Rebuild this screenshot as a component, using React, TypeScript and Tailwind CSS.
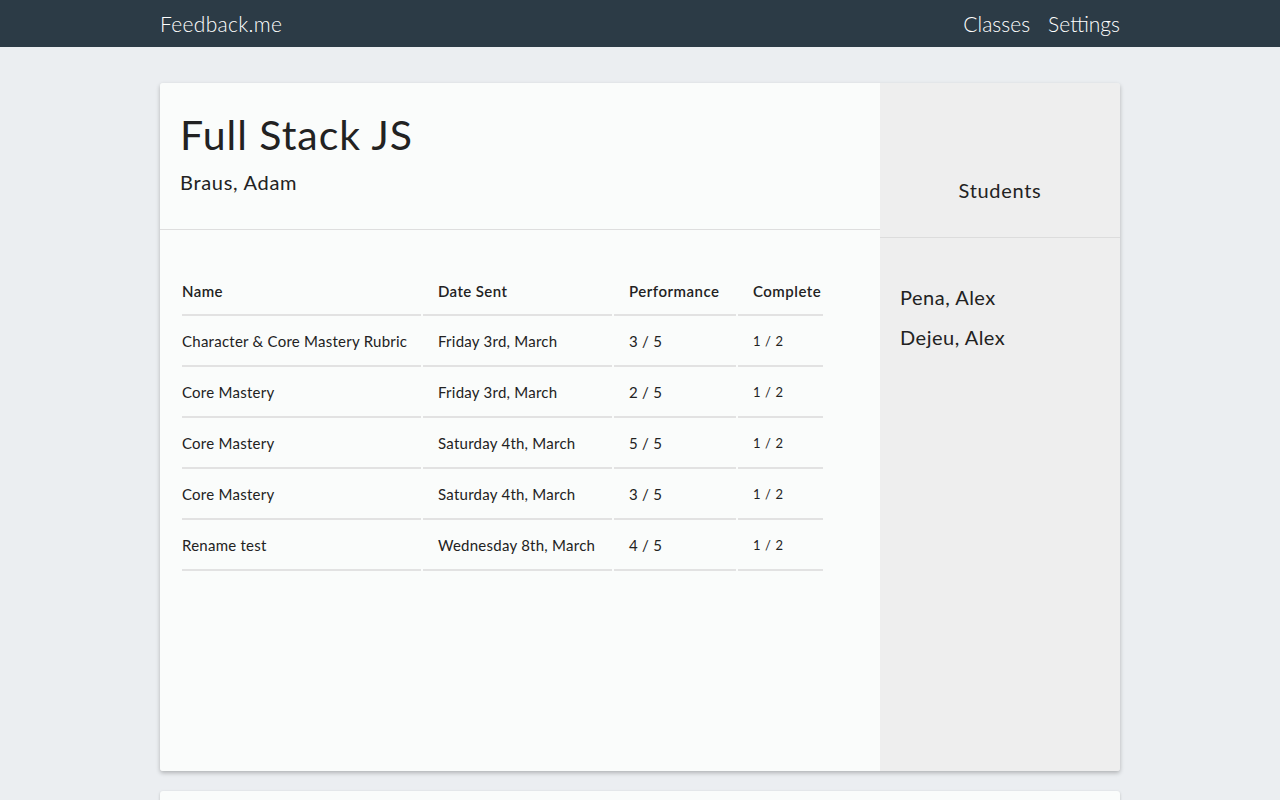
const rows = [
  { name: "Character & Core Mastery Rubric", date: "Friday 3rd, March", perf: "3 / 5", done: "1 / 2" },
  { name: "Core Mastery", date: "Friday 3rd, March", perf: "2 / 5", done: "1 / 2" },
  { name: "Core Mastery", date: "Saturday 4th, March", perf: "5 / 5", done: "1 / 2" },
  { name: "Core Mastery", date: "Saturday 4th, March", perf: "3 / 5", done: "1 / 2" },
  { name: "Rename test", date: "Wednesday 8th, March", perf: "4 / 5", done: "1 / 2" },
];

const students = ["Pena, Alex", "Dejeu, Alex"];

export default function App() {
  return (
    <div className="min-h-screen bg-[#ebeef1] text-[#222] font-['Lato',sans-serif]">
      <nav className="h-[47px] bg-[#2c3b46] text-white">
        <div className="w-[960px] mx-auto h-full flex items-center justify-between">
          <a className="text-[21px] font-light tracking-[0.3px]">Feedback.me</a>
          <div className="flex items-center gap-[18px] text-[21px] font-light">
            <a>Classes</a>
            <a>Settings</a>
          </div>
        </div>
      </nav>

      <div className="w-[960px] mx-auto pt-9">
        <div className="flex h-[688px] rounded-[3px] overflow-hidden shadow-[0_2px_4px_rgba(0,0,0,0.25)]">
          <div className="w-[720px] bg-[#fafcfb] flex flex-col">
            <div className="h-[147px] border-b border-[#dedede] px-5 pt-[28px]">
              <h1 className="text-[41px] leading-[48px] font-normal tracking-[1px]">Full Stack JS</h1>
              <p className="text-[20px] leading-[24px] mt-[11px] tracking-[0.7px]">Braus, Adam</p>
            </div>
            <div className="px-5 pt-[40px]">
              <table className="border-separate border-spacing-x-[2px] border-spacing-y-0 text-[15px] tracking-[0.25px]">
                <thead>
                  <tr className="h-[46px]">
                    <th className="w-[239px] text-left font-semibold px-0 pb-[2px] border-b-2 border-[#e2e2e2] tracking-[0.4px]">Name</th>
                    <th className="w-[189px] text-left font-semibold pl-[15px] pb-[2px] border-b-2 border-[#e2e2e2] tracking-[0.4px]">Date Sent</th>
                    <th className="w-[122px] text-left font-semibold pl-[15px] pb-[2px] border-b-2 border-[#e2e2e2] tracking-[0.5px]">Performance</th>
                    <th className="w-[85px] text-left font-semibold pl-[15px] pb-[2px] border-b-2 border-[#e2e2e2] tracking-[0.5px]">Complete</th>
                  </tr>
                </thead>
                <tbody>
                  {rows.map((r, i) => (
                    <tr key={i} className="h-[51px]">
                      <td className="pt-[2px] border-b-2 border-[#e2e2e2]">{r.name}</td>
                      <td className="pt-[2px] pl-[15px] border-b-2 border-[#e2e2e2]">{r.date}</td>
                      <td className="pt-[2px] pl-[15px] border-b-2 border-[#e2e2e2]">{r.perf}</td>
                      <td className="pt-[2px] pl-[15px] text-[13px] tracking-[0.6px] border-b-2 border-[#e2e2e2]">{r.done}</td>
                    </tr>
                  ))}
                </tbody>
              </table>
            </div>
          </div>

          <div className="w-[240px] bg-[#eeeeee] flex flex-col">
            <div className="h-[155px] border-b border-[#dcdcdc] flex items-center justify-center pt-[60px]">
              <span className="text-[20px] tracking-[0.7px]">Students</span>
            </div>
            <ul className="pl-5 pt-[39px] text-[20px] leading-[40px] tracking-[0.5px]">
              {students.map((s) => (
                <li key={s}>{s}</li>
              ))}
            </ul>
          </div>
        </div>

        <div className="mt-5 h-[20px] bg-[#fafcfb] rounded-t-[3px] shadow-[0_1px_3px_rgba(0,0,0,0.2)]" />
      </div>
    </div>
  );
}
